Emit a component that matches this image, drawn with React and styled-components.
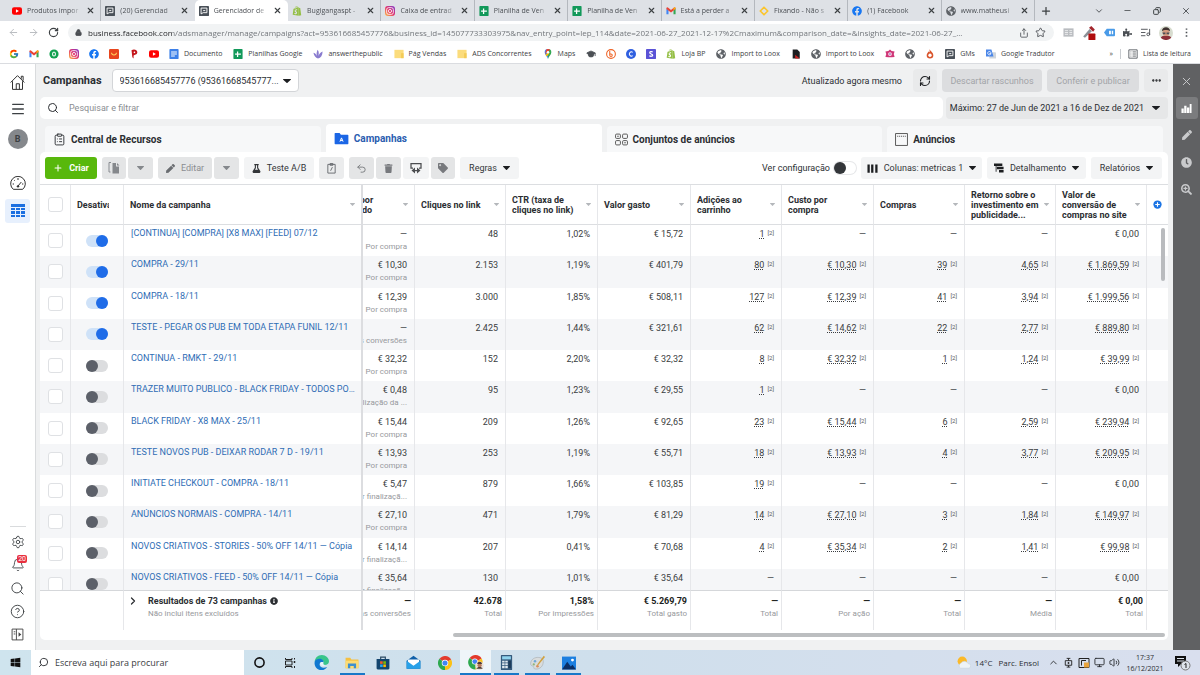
import { useState } from "react";
import styled, { createGlobalStyle, css } from "styled-components";
import {
  ArrowLeft,
  ArrowRight,
  Bell,
  ChevronDown,
  ChevronRight,
  ChevronUp,
  CircleHelp,
  ClipboardList,
  Copy,
  Ellipsis,
  GraduationCap,
  House,
  ListMusic,
  Lock,
  Menu,
  Minus,
  Monitor,
  Plus,
  RefreshCw,
  RotateCw,
  Search,
  Settings,
  Share,
  Star,
  Undo2,
  Volume2,
  X,
} from "lucide-react";
import { FcGoogle } from "react-icons/fc";
import {
  FaClock,
  FaFacebook,
  FaFlask,
  FaInfoCircle,
  FaPen,
  FaPuzzlePiece,
  FaSearchPlus,
  FaShopify,
  FaTag,
  FaTrash,
  FaWindows,
  FaGlobeAmericas,
} from "react-icons/fa";

const URL_TEXT =
  "business.facebook.com/adsmanager/manage/campaigns?act=953616685457776&business_id=145077733303975&nav_entry_point=lep_114&date=2021-06-27_2021-12-17%2Cmaximum&comparison_date=&insights_date=2021-06-27_...";

const BROWSER_TABS = [
  { icon: "youtube", label: "Produtos impor" },
  { icon: "ads", label: "(20) Gerenciad" },
  { icon: "ads", label: "Gerenciador de", active: true },
  { icon: "shopify", label: "Bugigangaspt -" },
  { icon: "instagram", label: "Caixa de entrad" },
  { icon: "sheets", label: "Planilha de Ven" },
  { icon: "sheets", label: "Planilha de Ven" },
  { icon: "gmail", label: "Está a perder a" },
  { icon: "fixando", label: "Fixando - Não s" },
  { icon: "facebook", label: "(1) Facebook" },
  { icon: "globe", label: "www.matheusi" },
];

const BOOKMARKS = [
  { icon: "google" },
  { icon: "gmail" },
  { icon: "bing" },
  { icon: "instagram" },
  { icon: "facebook" },
  { icon: "aliexpress" },
  { icon: "pin" },
  { icon: "youtube" },
  { icon: "docs", label: "Documento" },
  { icon: "sheets", label: "Planilhas Google" },
  { icon: "leaves", label: "answerthepublic" },
  { icon: "folder", label: "Pág Vendas" },
  { icon: "folder", label: "ADS Concorrentes" },
  { icon: "maps", label: "Maps" },
  { icon: "cap" },
  { icon: "bitly" },
  { icon: "canva" },
  { icon: "stripe" },
  { icon: "shopify", label: "Loja BP" },
  { icon: "globe", label: "Import to Loox" },
  { icon: "page" },
  { icon: "globe", label: "Import to Loox" },
  { icon: "flower" },
  { icon: "globe" },
  { icon: "flame" },
  { icon: "ads", label: "GMs" },
  { icon: "translate", label: "Google Tradutor" },
];

const COLUMNS = [
  { key: "result", label: "Custo por resultado", width: 52, cut: true },
  { key: "clicks", label: "Cliques no link", width: 91 },
  { key: "ctr", label: "CTR (taxa de cliques no link)", width: 92 },
  { key: "spent", label: "Valor gasto", width: 93 },
  { key: "carts", label: "Adições ao carrinho", width: 91 },
  { key: "cartCost", label: "Custo por compra", width: 92 },
  { key: "sales", label: "Compras", width: 91 },
  { key: "roas", label: "Retorno sobre o investimento em publicidade...", width: 91 },
  { key: "value", label: "Valor de conversão de compras no site", width: 91 },
];

const row = (on, name, result, kind, clicks, ctr, spent, carts, cartCost, sales, roas, value) => ({
  on, name, result, kind, clicks, ctr, spent, carts, cartCost, sales, roas, value,
});

const CAMPAIGNS = [
  row(true, "[CONTINUA] [COMPRA] [X8 MAX] [FEED] 07/12", "—", "Por compra", "48", "1,02%", "€ 15,72", "1", "—", "—", "—", "€ 0,00"),
  row(true, "COMPRA - 29/11", "€ 10,30", "Por compra", "2.153", "1,19%", "€ 401,79", "80", "€ 10,30", "39", "4,65", "€ 1.869,59"),
  row(true, "COMPRA - 18/11", "€ 12,39", "Por compra", "3.000", "1,85%", "€ 508,11", "127", "€ 12,39", "41", "3,94", "€ 1.999,56"),
  row(true, "TESTE - PEGAR OS PUB EM TODA ETAPA FUNIL 12/11", "—", "Várias conversões", "2.425", "1,44%", "€ 321,61", "62", "€ 14,62", "22", "2,77", "€ 889,80"),
  row(false, "CONTINUA - RMKT - 29/11", "€ 32,32", "Por compra", "152", "2,20%", "€ 32,32", "8", "€ 32,32", "1", "1,24", "€ 39,99"),
  row(false, "TRAZER MUITO PUBLICO - BLACK FRIDAY - TODOS POSTS", "€ 0,48", "Por visualização da ...", "95", "1,23%", "€ 29,55", "1", "—", "—", "—", "€ 0,00"),
  row(false, "BLACK FRIDAY - X8 MAX - 25/11", "€ 15,44", "Por compra", "209", "1,26%", "€ 92,65", "23", "€ 15,44", "6", "2,59", "€ 239,94"),
  row(false, "TESTE NOVOS PUB - DEIXAR RODAR 7 D - 19/11", "€ 13,93", "Por compra", "253", "1,19%", "€ 55,71", "18", "€ 13,93", "4", "3,77", "€ 209,95"),
  row(false, "INITIATE CHECKOUT - COMPRA - 18/11", "€ 5,47", "Por finalizaçã...", "879", "1,66%", "€ 103,85", "19", "—", "—", "—", "€ 0,00"),
  row(false, "ANÚNCIOS NORMAIS - COMPRA - 14/11", "€ 27,10", "Por compra", "471", "1,79%", "€ 81,29", "14", "€ 27,10", "3", "1,84", "€ 149,97"),
  row(false, "NOVOS CRIATIVOS - STORIES - 50% OFF 14/11 — Cópia", "€ 14,14", "Por finalizaçã...", "207", "0,41%", "€ 70,68", "4", "€ 35,34", "2", "1,41", "€ 99,98"),
  row(false, "NOVOS CRIATIVOS - FEED - 50% OFF 14/11 — Cópia", "€ 35,64", "Por finalizaçã...", "130", "1,01%", "€ 35,64", "—", "—", "—", "—", "€ 0,00"),
];

// modelled metrics carry the [2] footnote
const NOTED = ["carts", "cartCost", "sales", "roas", "value"];

const TOTALS = [
  { key: "result", value: "—", note: "Várias conversões" },
  { key: "clicks", value: "42.678", note: "Total" },
  { key: "ctr", value: "1,58%", note: "Por impressões" },
  { key: "spent", value: "€ 5.269,79", note: "Total gasto" },
  { key: "carts", value: "—", note: "Total" },
  { key: "cartCost", value: "—", note: "Por ação" },
  { key: "sales", value: "—", note: "Total" },
  { key: "roas", value: "—", note: "Média" },
  { key: "value", value: "€ 0,00", note: "Total" },
];

const Svg = ({ children, box = 24, size = 10 }) => (
  <svg width={size} height={size} viewBox={`0 0 ${box} ${box}`} fill="none" aria-hidden="true">
    {children}
  </svg>
);

const ChromeLogo = ({ size }) => (
  <Svg size={size}>
    <path d="M12 12 2.4 4.8A12 12 0 0 1 22.4 6Z" fill="#e33b2e" />
    <path d="M12 12 22.4 6A12 12 0 0 1 12 24Z" fill="#fbc116" />
    <path d="M12 12V24A12 12 0 0 1 2.4 4.8Z" fill="#2da94f" />
    <path d="M11 6.500H22.600L20 5H4Z" fill="#e33b2e" />
    <circle cx="12" cy="12" r="5.600" fill="#fff" />
    <circle cx="12" cy="12" r="4.400" fill="#4285f4" />
  </Svg>
);

const Brand = ({ name, size = 10 }) => {
  switch (name) {
    case "youtube":
      return (
        <Svg size={size}>
          <rect x="0" y="3" width="24" height="18" rx="5" fill="#f00" />
          <path d="M9.500 8v8l7-4z" fill="#fff" />
        </Svg>
      );
    case "ads":
      return (
        <Svg size={size}>
          <rect width="24" height="24" rx="2" fill="#4a5159" />
          <path d="M5 19V5h14v11H10l-5 3M10 11h5" stroke="#fff" strokeWidth="2.200" />
        </Svg>
      );
    case "shopify":
      return <FaShopify size={size} color="#95bf47" />;
    case "instagram":
      return (
        <Svg size={size}>
          <defs>
            <linearGradient id="insta" x1="0" y1="1" x2="1" y2="0">
              <stop offset="0" stopColor="#fdc448" />
              <stop offset="0.5" stopColor="#e1306c" />
              <stop offset="1" stopColor="#7a3bd0" />
            </linearGradient>
          </defs>
          <rect width="24" height="24" rx="7" fill="url(#insta)" />
          <rect x="4" y="4" width="16" height="16" rx="4.500" stroke="#fff" strokeWidth="2" />
          <circle cx="12" cy="12" r="3.800" stroke="#fff" strokeWidth="2" />
        </Svg>
      );
    case "sheets":
      return (
        <Svg size={size}>
          <rect x="1" width="22" height="24" rx="2" fill="#12995a" />
          <path d="M5 12h14M11 6v13" stroke="#fff" strokeWidth="3" />
        </Svg>
      );
    case "docs":
      return (
        <Svg size={size}>
          <rect x="1" width="22" height="24" rx="2" fill="#3d80e8" />
          <path d="M5 7h14M5 12h14M5 17h9" stroke="#fff" strokeWidth="2.500" />
        </Svg>
      );
    case "gmail":
      return (
        <Svg size={size}>
          <path d="M1 20V6l5 4v10z" fill="#4285f4" />
          <path d="M18 20V10l5-4v14z" fill="#34a853" />
          <path d="M1 7V4l3-1 8 6.500L20 3l3 1v3l-11 8.500z" fill="#ea4335" />
          <path d="M18 10l5-4V5l-2-2-3 2z" fill="#fbbc04" />
        </Svg>
      );
    case "fixando":
      return (
        <Svg size={size}>
          <path d="M12 3l9 9-9 9-9-9z" stroke="#fbc52d" strokeWidth="4" strokeLinejoin="round" />
        </Svg>
      );
    case "facebook":
      return <FaFacebook size={size} color="#1877f2" />;
    case "globe":
      return <FaGlobeAmericas size={size} color="#5f6368" />;
    case "google":
      return <FcGoogle size={size} />;
    case "bing":
      return (
        <Svg size={size}>
          <circle cx="12" cy="12" r="11" fill="#12a150" />
          <ellipse cx="12" cy="12" rx="3.500" ry="5" stroke="#fff" strokeWidth="2.500" />
        </Svg>
      );
    case "aliexpress":
      return (
        <Svg size={size}>
          <rect width="24" height="24" rx="3" fill="#e8451d" />
          <path d="M6 9c1 7 11 7 12 0" stroke="#ffd35c" strokeWidth="2.500" />
        </Svg>
      );
    case "pin":
      return (
        <Svg size={size}>
          <path d="M6 3c6-4 14-1 14 5s-7 6-9 8v7L8 20z" fill="#c4161c" />
          <circle cx="13" cy="8" r="2" fill="#fff" />
        </Svg>
      );
    case "leaves":
      return (
        <Svg size={size}>
          <path
            d="M12 23C6 21 3 17 1 9c5 1 7 5 8 8-1-6 0-10 2-15 4 5 3 10 2 15 2-5 5-9 10-11 0 9-4 15-11 17z"
            fill="#8a7ccf"
          />
        </Svg>
      );
    case "folder":
      return (
        <Svg size={size}>
          <path d="M1 2h22v20H1z" fill="#fbdc7c" />
          <path d="M17 22V10h6v12z" fill="#f3cb57" />
        </Svg>
      );
    case "maps":
      return (
        <Svg size={size}>
          <path d="M12 24C10 17 4 14 4 8a8 8 0 0 1 8-8z" fill="#4285f4" />
          <path d="M12 24c2-7 8-10 8-16a8 8 0 0 0-8-8z" fill="#34a853" />
          <path d="M5 12 17 2a8 8 0 0 0-9-1z" fill="#ea4335" />
          <path d="M6 14l6-6 3 3-6 7z" fill="#fbbc04" />
          <circle cx="12" cy="8" r="3" fill="#fff" />
        </Svg>
      );
    case "cap":
      return <GraduationCap size={size} color="#4b4f54" fill="#4b4f54" />;
    case "bitly":
      return (
        <Svg size={size}>
          <circle cx="12" cy="12" r="10.500" stroke="#ee6123" strokeWidth="2.500" />
          <path d="M9 5v10a3 3 0 1 0 3-3H9" stroke="#ee6123" strokeWidth="2.500" />
        </Svg>
      );
    case "canva":
      return (
        <Svg size={size}>
          <circle cx="12" cy="12" r="12" fill="#2f5fe0" />
          <path d="M16 8a5 5 0 1 0 0 8" stroke="#fff" strokeWidth="2.500" />
        </Svg>
      );
    case "stripe":
      return (
        <Svg size={size}>
          <rect width="24" height="24" rx="2" fill="#5a52d6" />
          <path d="M16 7c-3-1-7-1-7 2s7 3 7 6-5 3-8 1" stroke="#fff" strokeWidth="3" />
        </Svg>
      );
    case "page":
      return (
        <Svg size={size}>
          <path d="M4 1h11l6 6v16H4z" fill="#1c1e21" />
          <path d="M10 14l11 9H10z" fill="#c22" />
        </Svg>
      );
    case "flower":
      return (
        <Svg size={size}>
          <path d="M1 6l7-1 4-4 4 4 7 1-2 6 2 7-7 1h-8l-7-1 2-7z" fill="#cf3677" />
          <circle cx="12" cy="12" r="4.500" fill="#fbdce9" />
          <circle cx="12" cy="12" r="2" fill="#7a4fb0" />
        </Svg>
      );
    case "flame":
      return (
        <Svg size={size}>
          <path d="M11 0c1 5 9 8 9 15a8 8 0 0 1-16 0c0-4 3-5 4-9l3 2z" fill="#d9542b" />
          <circle cx="12" cy="15" r="4" fill="#fff" />
        </Svg>
      );
    case "translate":
      return (
        <Svg size={size}>
          <rect x="8" y="8" width="16" height="15" rx="1" fill="#cfd5dc" />
          <path d="M0 1h13l5 17H0z" fill="#4a86e8" />
          <path d="M12 9a4 4 0 1 0 0 2H8" stroke="#fff" strokeWidth="2" />
        </Svg>
      );
    default:
      return null;
  }
};

const Caret = ({ w = 7, h = 4, color = "#1c1e21" }) => (
  <svg width={w} height={h} viewBox="0 0 8 5" preserveAspectRatio="none" aria-hidden="true">
    <path d="M0.500 0h7a.5.5 0 0 1 .3.8L4.500 4.600a.7.7 0 0 1-1 0L.2.8A.5.5 0 0 1 .5 0z" fill={color} />
  </svg>
);

const TableIcon = () => (
  <svg width="16" height="14" viewBox="0 0 16 14" aria-hidden="true">
    <path
      d="M1 0h14v3H1zM1 4h4v2H1zM6 4h4v2H6zM11 4h4v2h-4zM1 7h4v3H1zM6 7h4v3H6zM11 7h4v3h-4zM1 11h4v2H1zM6 11h4v2H6zM11 11h4v2h-4z"
      fill="#1b6fe0"
    />
  </svg>
);

const TaskIcon = ({ name }) => {
  switch (name) {
    case "cortana":
      return (
        <Svg size={11}>
          <circle cx="12" cy="12" r="10" stroke="#111" strokeWidth="3.500" />
        </Svg>
      );
    case "taskview":
      return (
        <Svg size={12}>
          <path d="M3 2v3h13V2M3 22v-3h13v3M3 8h13v8H3zM21 2v3M21 18v4" stroke="#222" strokeWidth="2" />
          <path d="M19.500 8h3v4h-3z" fill="#222" />
        </Svg>
      );
    case "edge":
      return (
        <Svg size={15}>
          <path d="M1 12C1 5 6 0 12.500 0S24 5 24 10c0 4-3 6-7 6-2 0-3-1-2-3 1-3-1-6-5-6-5 0-9 2-9 5z" fill="#39c58b" />
          <path d="M1 11c1-4 5-5 8-5 4 0 7 3 6 6-3-2-6 0-6 3 0 4 5 7 12 4-2 3-5 5-9 5C5 24 0 18 1 11z" fill="#1078d0" />
          <path d="M9.500 13c2-3 5-2 5.500-.5-1 2 0 3.500 3 3.500-3 3-8 1-8.500-3z" fill="#e6f3fa" />
        </Svg>
      );
    case "explorer":
      return (
        <Svg size={14}>
          <path d="M1 3h8l2 3h12v15H1z" fill="#f5c042" />
          <path d="M1 8h22v13H1z" fill="#fddc74" />
          <path d="M5 21v-8h14v8h-4v-4H9v4z" fill="#3e8fd0" />
        </Svg>
      );
    case "store":
      return (
        <Svg size={14}>
          <path d="M8 6V2h8v4" stroke="#2c4a63" strokeWidth="2" />
          <path d="M1 5h22v16a2 2 0 0 1-2 2H3a2 2 0 0 1-2-2z" fill="#13456e" />
          <path d="M7 9h4.500v4.500H7z" fill="#f05a28" />
          <path d="M12.500 9H17v4.500h-4.500z" fill="#7fba00" />
          <path d="M7 14.500h4.500V19H7z" fill="#22a7f0" />
          <path d="M12.500 14.500H17V19h-4.500z" fill="#ffb900" />
        </Svg>
      );
    case "mail":
      return (
        <Svg size={15}>
          <path d="M1 9 12 1l11 8v13H1z" fill="#0f5fa8" />
          <path d="M3 7h18v8l-9 5-9-5z" fill="#fff" />
          <path d="M1 9l11 8 11-8v13H1z" fill="#28a1e8" />
        </Svg>
      );
    case "chrome":
      return <ChromeLogo size={14} />;
    case "chromeUser":
      return (
        <svg width="16" height="15" viewBox="0 0 26 25" aria-hidden="true">
          <path d="M12 12 2.400 4.800A12 12 0 0 1 22.400 6Z" fill="#e33b2e" />
          <path d="M12 12 22.400 6A12 12 0 0 1 12 24Z" fill="#fbc116" />
          <path d="M12 12V24A12 12 0 0 1 2.400 4.800Z" fill="#2da94f" />
          <circle cx="11" cy="11" r="5" fill="#fff" />
          <circle cx="11" cy="11" r="4" fill="#4285f4" />
          <circle cx="19" cy="18" r="7" fill="#e9e2da" />
          <circle cx="19" cy="17" r="3.500" fill="#b5785a" />
          <path d="M15 15c0-5 8-5 8 0zM14 23c1-4 9-4 10 0z" fill="#4c3b36" />
        </svg>
      );
    case "calc":
      return (
        <Svg size={15}>
          <rect x="3" y="0" width="18" height="24" rx="1" fill="#35597c" />
          <path d="M5 2h14v5H5z" fill="#8fd3ee" />
          <path d="M5 9h4v3H5zM10 9h4v3h-4zM5 13h4v3H5zM10 13h4v3h-4zM5 17h4v4H5zM10 17h4v4h-4z" fill="#dfe8ee" />
          <path d="M15 9h4v12h-4z" fill="#1c3a58" />
        </Svg>
      );
    case "notes":
      return (
        <Svg size={15}>
          <path d="M1 14C1 7 8 3 14 4c6 0 8 4 7 9-1 7-8 11-14 9-2-1 0-3-2-4s-4-1-4-4z" fill="#d9dcdc" stroke="#a9aeb0" />
          <circle cx="8" cy="10" r="2" fill="#6fa8d8" />
          <circle cx="6" cy="15" r="1.800" fill="#8fb57a" />
          <circle cx="12" cy="18" r="2" fill="#d98c5f" />
          <path d="M22 1 13 13l-3 5 4-3L24 3z" fill="#d0a03e" />
        </Svg>
      );
    default:
      return (
        <Svg size={14}>
          <path d="M0 1h24v22H0z" fill="#1c7fe0" />
          <path d="M0 23 9 10l6 8 3-3 6 8z" fill="#0b2f66" />
          <circle cx="18" cy="7" r="2.500" fill="#fff" />
        </Svg>
      );
  }
};

const TASKS = [
  { name: "cortana", label: "Cortana" },
  { name: "taskview", label: "Visão de tarefas" },
  { name: "edge", label: "Edge" },
  { name: "explorer", label: "Explorador", open: true },
  { name: "store", label: "Loja" },
  { name: "mail", label: "Correio" },
  { name: "chrome", label: "Chrome" },
  { name: "chromeUser", label: "Chrome", open: true, active: true },
  { name: "calc", label: "Calculadora", open: true },
  { name: "notes", label: "Paint", open: true },
  { name: "photos", label: "Fotos", open: true },
];

const BrowserChrome = () => (
  <header>
    <TabStrip>
      <TabList>
        {BROWSER_TABS.map((tab, i) => (
          <BrowserTab
            key={i}
            $active={tab.active}
            $bare={tab.active || BROWSER_TABS[i + 1]?.active}
          >
            <Brand name={tab.icon} />
            <TabLabel>{tab.label}</TabLabel>
            <PlainButton aria-label="Fechar">
              <X size={9} strokeWidth={3} />
            </PlainButton>
          </BrowserTab>
        ))}
      </TabList>
      <NewTab aria-label="Nova guia">
        <Plus size={12} strokeWidth={2.5} />
      </NewTab>
      <WindowControls>
        <PlainButton aria-label="Pesquisar guias"><ChevronDown size={10} /></PlainButton>
        <PlainButton aria-label="Minimizar"><Minus size={9} /></PlainButton>
        <PlainButton aria-label="Restaurar"><Copy size={8} strokeWidth={3} transform="scale(-1 1)" /></PlainButton>
        <PlainButton aria-label="Fechar janela"><X size={10} /></PlainButton>
      </WindowControls>
    </TabStrip>
    <AddressRow>
      <PlainButton aria-label="Voltar"><ArrowLeft size={11} color="#b5b8bc" /></PlainButton>
      <PlainButton aria-label="Avançar"><ArrowRight size={11} color="#b5b8bc" /></PlainButton>
      <PlainButton aria-label="Recarregar"><RotateCw size={11} strokeWidth={2.5} /></PlainButton>
      <AddressBar>
        <Lock size={7} fill="#4b4f54" strokeWidth={3} />
        <AddressInput aria-label="Endereço" defaultValue={URL_TEXT} />
        <Share size={10} />
        <Star size={11} />
      </AddressBar>
      <Extensions>
        <Svg size={11}>
          <rect x="1" y="3" width="22" height="18" fill="#b9bcc0" />
          <path d="M4 8h7M4 12h7M4 16h7M14 8h6M14 12h6M14 16h6" stroke="#fff" strokeWidth="1.500" />
        </Svg>
        <Svg size={14}>
          <path d="M2 18 13 5l4 4L5 20z" fill="#8b9097" />
          <path d="M12 3l7 7 3-4-6-6z" fill="#a3262c" />
          <rect x="11" y="13" width="12" height="11" rx="1" fill="#b00d0d" />
        </Svg>
        <Svg size={11}>
          <path d="M0 12l6-8h16a2 2 0 0 1 2 2v12a2 2 0 0 1-2 2H6z" fill="#4a9be8" />
          <path d="M11 8h4v8h-4zM17 8h3v8h-3z" fill="#fff" />
        </Svg>
        <FaPuzzlePiece size={9} />
        <ListMusic size={11} />
        <Svg size={14}>
          <circle cx="12" cy="12" r="12" fill="#d7dccf" />
          <path d="M3 20c2-5 16-5 18 0a12 12 0 0 1-18 0z" fill="#8c2f38" />
          <circle cx="12" cy="11" r="6" fill="#d49a7e" />
          <path d="M5 9c0-9 14-9 14 0-3-3-11-3-14 0z" fill="#3e3230" />
          <path d="M6 11h5v3H7zM13 11h5l-1 3h-4z" fill="#4a4f57" />
        </Svg>
        <Svg size={11}>
          <path d="M12 3v3M12 10.500v3M12 18v3" stroke="#4b4f54" strokeWidth="3.500" />
        </Svg>
      </Extensions>
    </AddressRow>
    <BookmarkBar>
      {BOOKMARKS.map((item, i) => (
        <Bookmark key={i} href="#" aria-label={item.label || item.icon}>
          <Brand name={item.icon} />
          {item.label && <BookmarkLabel>{item.label}</BookmarkLabel>}
        </Bookmark>
      ))}
      <BookmarkEnd>
        <span>»</span>
        <ReadingList>
          <Svg>
            <path d="M2 2h20v20H2zM6 7h2M11 7h8M6 12h2M11 12h8M6 17h2M11 17h8" stroke="#4b4f54" strokeWidth="2" />
          </Svg>
          Lista de leitura
        </ReadingList>
      </BookmarkEnd>
    </BookmarkBar>
  </header>
);

const SideNav = () => (
  <Side>
    <SideGroup>
      <SideButton aria-label="Início">
        <Svg size={15}>
          <path d="M1 12 12 1l11 11M4 10v13h16V10M15 23v-9h-5v9M18 6V2h3v7" stroke="#333" strokeWidth="1.600" />
        </Svg>
      </SideButton>
      <SideButton aria-label="Menu"><Menu size={16} strokeWidth={2} /></SideButton>
      <Avatar aria-label="Conta">B</Avatar>
    </SideGroup>
    <SideGroup $spaced>
      <SideButton aria-label="Visão geral">
        <Svg size={16}>
          <path d="M5 20A11 11 0 1 1 19 20zM12 15l5-6M12 3v3M4 12h2M6.500 6.500l1 1M18 12h2" stroke="#333" strokeWidth="1.500" />
          <circle cx="12" cy="15.500" r="1.800" fill="#333" />
        </Svg>
      </SideButton>
      <SideButton aria-label="Campanhas" $active><TableIcon /></SideButton>
    </SideGroup>
    <SideBottom>
      <SideButton aria-label="Definições"><Settings size={14} strokeWidth={1.5} /></SideButton>
      <SideButton aria-label="Notificações">
        <Bell size={14} strokeWidth={1.5} />
        <Badge>20</Badge>
      </SideButton>
      <SideButton aria-label="Pesquisar"><Search size={15} strokeWidth={1.5} /></SideButton>
      <SideButton aria-label="Ajuda"><CircleHelp size={15} strokeWidth={1.5} /></SideButton>
      <SideButton aria-label="Expandir">
        <Svg size={13}>
          <path d="M2 2h20v20H2zM10 2v20M5 7h3M5 11h3" stroke="#444" strokeWidth="1.700" />
          <path d="M14 8l5 4-5 4z" fill="#444" />
        </Svg>
      </SideButton>
    </SideBottom>
  </Side>
);

const Toolbar = () => (
  <ToolbarRow>
    <CreateButton>
      <Plus size={10} strokeWidth={2.5} />
      Criar
    </CreateButton>
    <Split>
      <ToolButton $tone="off" $w={24} aria-label="Duplicar">
        <Svg size={12}>
          <path d="M6 1H2v19h3" stroke="#888b90" strokeWidth="2" />
          <path d="M9 2h7v7h6v14H9z" fill="#85888c" />
          <path d="M18 2l5 5h-5z" fill="#85888c" />
        </Svg>
      </ToolButton>
      <ToolButton $tone="off" $w={25} aria-label="Mais opções de duplicar"><Caret color="#85888c" /></ToolButton>
    </Split>
    <Split>
      <ToolButton $tone="off" $w={54}>
        <FaPen size={9} color="#6a6d71" />
        Editar
      </ToolButton>
      <ToolButton $tone="off" $w={25} aria-label="Mais opções de editar"><Caret color="#85888c" /></ToolButton>
    </Split>
    <ToolButton $w={70}>
      <FaFlask size={9} />
      Teste A/B
    </ToolButton>
    <ToolButton $tone="mid" $w={25} aria-label="Regras rápidas">
      <Svg size={11}>
        <path d="M4 3h16v19H4zM9 1h6v4H9zM10 17l4-8" stroke="#65686c" strokeWidth="2" />
      </Svg>
    </ToolButton>
    <Split>
      <ToolButton $tone="off" $w={25} aria-label="Anular"><Undo2 size={11} color="#77797d" /></ToolButton>
      <ToolButton $tone="off" $w={25} aria-label="Eliminar"><FaTrash size={9} color="#77797d" /></ToolButton>
      <ToolButton $w={26} aria-label="Trocar">
        <Svg size={12}>
          <path d="M6 12H2V3h20v9h-4M8 17h8" stroke="#4b4d50" strokeWidth="2.500" />
          <path d="M10 11v12l-7-6zM14 11v12l7-6z" fill="#4b4d50" />
        </Svg>
      </ToolButton>
      <ToolButton $tone="off" $w={24} aria-label="Etiqueta"><FaTag size={10} color="#77797d" /></ToolButton>
    </Split>
    <ToolButton $w={59} aria-haspopup="menu">
      Regras
      <Caret />
    </ToolButton>
    <SetupLabel>
      Ver configuração
      <Switch type="checkbox" $ghost />
    </SetupLabel>
    <ToolButton $w={121} aria-haspopup="menu">
      <Svg size={11}>
        <path d="M1 3h5v18H1zM9 3h5v18H9zM18 3h5v18h-5z" fill="#1c1e21" />
      </Svg>
      Colunas: metricas 1
      <Caret />
    </ToolButton>
    <ToolButton $w={99} aria-haspopup="menu">
      <Svg size={10}>
        <path d="M0 1h20v6H0zM7 9h16v6H7zM12 17h11v6H12zM4 7h2v14H4z" fill="#1c1e21" />
      </Svg>
      Detalhamento
      <Caret />
    </ToolButton>
    <ToolButton $w={71} aria-haspopup="menu">
      Relatórios
      <Caret />
    </ToolButton>
  </ToolbarRow>
);

const CampaignRow = ({ item, onToggle }) => (
  <tr>
    <Td $mid>
      <Tick type="checkbox" aria-label={`Selecionar ${item.name}`} />
    </Td>
    <Td $mid>
      <Switch
        type="checkbox"
        checked={item.on}
        onChange={onToggle}
        aria-label={`Ativar ${item.name}`}
      />
    </Td>
    <Td $edge>
      <CampaignLink href="#">{item.name}</CampaignLink>
    </Td>
    {COLUMNS.map(({ key }) => {
      const value = item[key];
      const noted = NOTED.includes(key) && value !== "—" && value !== "€ 0,00";
      return (
        <Td key={key}>
          <Value>
            {noted ? <Estimated>{value}</Estimated> : value}
            {noted && <Footnote>[2]</Footnote>}
          </Value>
          {key === "result" && <Note>{item.kind}</Note>}
        </Td>
      );
    })}
    <Td />
  </tr>
);

const CampaignTable = () => {
  const [items, setItems] = useState(CAMPAIGNS);

  const toggle = (index) =>
    setItems(items.map((item, i) => (i === index ? { ...item, on: !item.on } : item)));

  return (
    <TableArea>
      <Table>
        <colgroup>
          <Col $w={31} />
          <Col $w={53} />
          <col />
          {COLUMNS.map((c) => (
            <Col key={c.key} $w={c.width} />
          ))}
          <Col $w={21} />
        </colgroup>
        <thead>
          <tr>
            <Th $center><Tick type="checkbox" aria-label="Selecionar tudo" /></Th>
            <Th><Clipped>Desativar</Clipped></Th>
            <Th $edge>
              <HeadInner>
                Nome da campanha
                <Caret w={5} h={3} color="#b4b7bb" />
              </HeadInner>
            </Th>
            {COLUMNS.map((c) => (
              <Th key={c.key}>
                <HeadInner>
                  {c.cut ? <CutLabel><span>{c.label}</span></CutLabel> : <HeadLabel>{c.label}</HeadLabel>}
                  <Caret w={5} h={3} color="#b4b7bb" />
                </HeadInner>
              </Th>
            ))}
            <Th $center>
              <PlainButton aria-label="Adicionar coluna">
                <Svg size={9}>
                  <circle cx="12" cy="12" r="11" fill="#1b74e4" />
                  <path d="M12 6v12M6 12h12" stroke="#fff" strokeWidth="3" />
                </Svg>
              </PlainButton>
            </Th>
          </tr>
        </thead>
        <tbody>
          {items.map((item, i) => (
            <CampaignRow key={item.name} item={item} onToggle={() => toggle(i)} />
          ))}
        </tbody>
        <tfoot>
          <tr>
            <FootTd colSpan={2} />
            <FootTd $edge>
              <Summary>
                <ChevronRight size={12} strokeWidth={2.5} />
                <div>
                  <SummaryTitle>
                    Resultados de 73 campanhas
                    <FaInfoCircle size={8} />
                  </SummaryTitle>
                  <SummaryNote>Não inclui itens excluídos</SummaryNote>
                </div>
              </Summary>
            </FootTd>
            {TOTALS.map((t) => (
              <FootTd key={t.key}>
                <Value $bold>{t.value}</Value>
                <Note>{t.note}</Note>
              </FootTd>
            ))}
            <FootTd />
          </tr>
        </tfoot>
      </Table>
      <ScrollThumb />
    </TableArea>
  );
};

const Taskbar = () => (
  <TaskbarRow>
    <StartButton aria-label="Iniciar"><FaWindows size={11} /></StartButton>
    <TaskSearch>
      <Search size={11} transform="scale(-1 1)" />
      <TaskInput aria-label="Pesquisar no Windows" placeholder="Escreva aqui para procurar" />
    </TaskSearch>
    <TaskList>
      {TASKS.map((t, i) => (
        <Task key={i} aria-label={t.label} $open={t.open} $active={t.active}>
          <TaskIcon name={t.name} />
        </Task>
      ))}
    </TaskList>
    <Tray>
      <Svg size={14}>
        <circle cx="9" cy="9" r="8" fill="#fbb929" />
        <path d="M6 21a5 5 0 0 1 1-9 7 7 0 0 1 12 1 4 4 0 0 1 1 8z" fill="#eef3f7" stroke="#c7d3dd" />
      </Svg>
      <Weather><span>14°C</span><span>Parc. Ensol</span></Weather>
      <ChevronUp size={11} />
      <Svg size={11}>
        <path d="M5 8h14v10H5zM8 3h8M8 22h8M12 3v5M12 18v4" stroke="#222" strokeWidth="2" />
        <circle cx="12" cy="13" r="2" fill="#222" />
      </Svg>
      <Svg size={12}>
        <path d="M2 3h20v18H2zM7 17V7h9" stroke="#222" strokeWidth="2" />
        <rect x="12" y="11" width="10" height="10" fill="#e8a33d" />
      </Svg>
      <Monitor size={11} />
      <Volume2 size={11} />
      <Clockface>
        <span>17:37</span>
        <span>16/12/2021</span>
      </Clockface>
      <svg width="17" height="17" viewBox="0 0 17 17" aria-hidden="true">
        <path d="M1 2h11v8H7l-3 3v-3H1z" fill="#111" />
        <path d="M3 4.500h7M3 7h7" stroke="#dfe6ee" />
        <circle cx="11.500" cy="11.500" r="4.500" fill="#dde3ea" stroke="#777" />
        <path d="M10.500 10.500l1.500-1v4.500" stroke="#222" fill="none" />
      </svg>
    </Tray>
  </TaskbarRow>
);

export default function App() {
  return (
    <Screen>
      <GlobalStyle />
      <BrowserChrome />
      <Body>
        <SideNav />
        <Main>
          <TopRow>
            <Title>Campanhas</Title>
            <AccountPicker>
              <AccountSelect aria-label="Conta de anúncios">
                <option>953616685457776 (95361668545777...</option>
              </AccountSelect>
              <Caret w={8} />
            </AccountPicker>
            <Updated>Atualizado agora mesmo</Updated>
            <TopButton $w={24} aria-label="Atualizar"><RefreshCw size={12} strokeWidth={2.2} /></TopButton>
            <TopButton $w={100} $muted>Descartar rascunhos</TopButton>
            <TopButton $w={92} $muted>Conferir e publicar</TopButton>
            <TopButton $w={24} aria-label="Mais"><Ellipsis size={11} strokeWidth={3} /></TopButton>
          </TopRow>
          <FilterRow>
            <SearchBox>
              <Search size={12} />
              <SearchInput aria-label="Pesquisar" placeholder="Pesquisar e filtrar" />
            </SearchBox>
            <DateButton>
              Máximo: 27 de Jun de 2021 a 16 de Dez de 2021
              <Caret w={8} />
            </DateButton>
          </FilterRow>
          <Levels>
            <Level>
              <ClipboardList size={13} strokeWidth={1.7} />
              Central de Recursos
            </Level>
            <Level $active>
              <Svg size={15}>
                <path d="M1 4a1 1 0 0 1 1-1h7l2 3h11a1 1 0 0 1 1 1v13a1 1 0 0 1-1 1H2a1 1 0 0 1-1-1z" fill="#1b66e5" />
                <path d="M9.500 17l2.500-6 2.500 6M10.500 15h3" stroke="#fff" strokeWidth="1.600" />
              </Svg>
              Campanhas
            </Level>
            <Level>
              <Svg size={13}>
                <path
                  d="M1 4a2 2 0 0 1 2-2h5a2 2 0 0 1 2 2v4a2 2 0 0 1-2 2H3a2 2 0 0 1-2-2zM14 4a2 2 0 0 1 2-2h5a2 2 0 0 1 2 2v4a2 2 0 0 1-2 2h-5a2 2 0 0 1-2-2zM1 16a2 2 0 0 1 2-2h5a2 2 0 0 1 2 2v4a2 2 0 0 1-2 2H3a2 2 0 0 1-2-2zM14 16a2 2 0 0 1 2-2h5a2 2 0 0 1 2 2v4a2 2 0 0 1-2 2h-5a2 2 0 0 1-2-2zM4 6h3M17 18h3"
                  stroke="#444"
                  strokeWidth="1.600"
                />
              </Svg>
              Conjuntos de anúncios
            </Level>
            <Level>
              <Svg size={13}>
                <path d="M1 1h22v22H1z" stroke="#444" strokeWidth="1.600" />
                <path d="M4 6h16" stroke="#444" strokeWidth="1.600" strokeDasharray="2 1.500" />
              </Svg>
              Anúncios
            </Level>
          </Levels>
          <Panel>
            <Toolbar />
            <CampaignTable />
            <HorizontalScroll><HorizontalThumb /></HorizontalScroll>
          </Panel>
        </Main>
        <Rail>
          <RailButton aria-label="Fechar painel"><X size={13} strokeWidth={1.8} /></RailButton>
          <RailButton aria-label="Gráficos" $active>
            <Svg size={11}>
              <path d="M1 12h5v10H1zM7 6h5v16H7zM13 10h5v12h-5zM19 2h4v20h-4z" fill="#fff" />
            </Svg>
          </RailButton>
          <RailButton aria-label="Editar"><FaPen size={10} /></RailButton>
          <RailButton aria-label="Histórico"><FaClock size={11} /></RailButton>
          <RailButton aria-label="Inspecionar"><FaSearchPlus size={11} /></RailButton>
        </Rail>
      </Body>
      <Taskbar />
    </Screen>
  );
}

const GlobalStyle = createGlobalStyle`
  * {
    box-sizing: border-box;
  }

  body {
    margin: 0;
    font-family: Roboto, "Liberation Sans", sans-serif;
    font-size: 9px;
    color: #2b2e32;
  }

  button, input, select {
    font: inherit;
    color: inherit;
    margin: 0;
    border: none;
    outline: none;
  }

  svg {
    flex: none;
  }
`;

const Screen = styled.div`
  display: flex;
  flex-direction: column;
  height: 100vh;
  overflow: hidden;
  background: #f0f1f2;
`;

const PlainButton = styled.button`
  display: flex;
  align-items: center;
  justify-content: center;
  padding: 0;
  background: none;
  color: #3c4043;
`;

/* browser window */

const TabStrip = styled.div`
  display: flex;
  align-items: stretch;
  height: 21px;
  padding-left: 8px;
  background: #dee1e6;
  font-family: "Open Sans", "Noto Sans", sans-serif;
  font-size: 7px;
`;

const TabList = styled.div`
  display: flex;
  flex: 1;
  min-width: 0;
`;

const BrowserTab = styled.div`
  display: flex;
  flex: 1;
  align-items: center;
  gap: 5px;
  min-width: 0;
  padding: 0 5px 0 4px;
  color: #4b4f54;
  border-right: 1px solid ${({ $bare }) => ($bare ? "transparent" : "#b4b8be")};
  ${({ $active }) =>
    $active &&
    css`
      background: #fff;
      border-radius: 5px 5px 0 0;
    `}
`;

const TabLabel = styled.span`
  flex: 1;
  min-width: 0;
  overflow: hidden;
  white-space: nowrap;
  mask-image: linear-gradient(90deg, #000 80%, transparent);
`;

const NewTab = styled(PlainButton)`
  width: 22px;
`;

const WindowControls = styled.div`
  display: grid;
  grid-template-columns: repeat(4, 29px);
  margin-left: 27px;
`;

const AddressRow = styled.div`
  display: flex;
  align-items: center;
  gap: 9px;
  height: 23px;
  padding: 0 8px;
  background: #fff;
`;

const AddressBar = styled.div`
  display: flex;
  flex: 1;
  align-items: center;
  gap: 6px;
  height: 17px;
  padding: 0 8px 0 7px;
  border-radius: 9px;
  background: #f1f3f4;
  color: #4b4f54;
`;

const AddressInput = styled.input`
  flex: 1;
  min-width: 0;
  padding: 0;
  background: linear-gradient(90deg, #202124 84px, #6b6f74 84px);
  background-clip: text;
  color: transparent;
  font-family: "Open Sans", "Noto Sans", sans-serif;
  font-size: 8px;
`;

const Extensions = styled.div`
  display: flex;
  align-items: center;
  gap: 8px;
  color: #4b4f54;
`;

const BookmarkBar = styled.nav`
  display: flex;
  align-items: center;
  gap: 10px;
  height: 20px;
  padding: 0 9px;
  background: #fff;
  border-bottom: 1px solid #dadce0;
  font-family: "Open Sans", "Noto Sans", sans-serif;
  font-size: 7px;
  color: #3c4043;
`;

const Bookmark = styled.a`
  display: flex;
  align-items: center;
  gap: 5px;
  color: inherit;
  text-decoration: none;
  white-space: nowrap;
`;

const BookmarkLabel = styled.span`
  margin-right: 1px;
`;

const BookmarkEnd = styled.div`
  display: flex;
  align-items: center;
  gap: 7px;
  margin-left: auto;
`;

const ReadingList = styled(PlainButton)`
  gap: 5px;
  padding-left: 7px;
  border-left: 1px solid #c8cbcf;
  white-space: nowrap;
`;

/* page frame */

const Body = styled.div`
  display: flex;
  flex: 1;
  min-height: 0;
`;

const Side = styled.nav`
  display: flex;
  flex-direction: column;
  width: 36px;
  padding: 6px 0 5px;
  background: #fff;
  border-right: 1px solid #d9dbdd;
`;

const SideGroup = styled.div`
  display: flex;
  flex-direction: column;
  align-items: center;
  gap: 3px;
  margin-top: ${({ $spaced }) => ($spaced ? "23px" : "0")};
`;

const SideBottom = styled.div`
  display: flex;
  flex-direction: column;
  align-items: center;
  gap: 1px;
  width: 16px;
  margin: auto auto 0;
  padding-top: 4px;
  border-top: 1px solid #d9dbdd;

  button {
    height: 22px;
  }
`;

const SideButton = styled(PlainButton)`
  position: relative;
  width: 25px;
  height: 24px;
  border-radius: 3px;
  background: ${({ $active }) => ($active ? "#e7f0fd" : "none")};
`;

const Avatar = styled(PlainButton)`
  width: 20px;
  height: 20px;
  margin-top: 5px;
  border-radius: 50%;
  background: #85888c;
  font-size: 9px;
  font-weight: 700;
`;

const Badge = styled.span`
  position: absolute;
  top: 1px;
  right: 3px;
  padding: 0 1px;
  border-radius: 2px;
  background: #e8303f;
  color: #fff;
  font-size: 7px;
  line-height: 8px;
`;

const Main = styled.main`
  display: flex;
  flex: 1;
  flex-direction: column;
  min-width: 0;
  padding: 5px 5px 10px 4px;
`;

const TopRow = styled.div`
  display: flex;
  align-items: center;
  gap: 5px;
  height: 23px;
`;

const Title = styled.h1`
  margin: 0 5px 0 3px;
  font-size: 11px;
  font-weight: 700;
`;

const AccountPicker = styled.div`
  display: flex;
  align-items: center;
  width: 187px;
  height: 23px;
  padding: 0 7px;
  border: 1px solid #d3d5d8;
  border-radius: 4px;
  background: #fff;
`;

const AccountSelect = styled.select`
  flex: 1;
  min-width: 0;
  padding: 0;
  appearance: none;
  background: none;
`;

const Updated = styled.span`
  margin: 0 6px 0 auto;
`;

const TopButton = styled.button`
  display: flex;
  align-items: center;
  justify-content: center;
  width: ${({ $w }) => $w}px;
  height: 23px;
  padding: 0;
  border-radius: 4px;
  background: ${({ $muted }) => ($muted ? "#dcdddf" : "#e9eaeb")};
  color: ${({ $muted }) => ($muted ? "#a2a4a8" : "#1c1e21")};
  white-space: nowrap;
`;

const FilterRow = styled.div`
  display: flex;
  gap: 3px;
  height: 22px;
  margin-top: 5px;
`;

const SearchBox = styled.label`
  display: flex;
  flex: 1;
  align-items: center;
  gap: 10px;
  padding: 0 7px;
  border-radius: 5px;
  background: #fff;
`;

const SearchInput = styled.input`
  flex: 1;
  padding: 0;
  background: none;

  &::placeholder {
    color: #8a8d91;
    opacity: 1;
  }
`;

const DateButton = styled.button`
  display: flex;
  align-items: center;
  justify-content: flex-end;
  gap: 8px;
  width: 222px;
  padding: 0 8px;
  border-radius: 4px;
  background: #e6e7e8;
  white-space: nowrap;
`;

const Levels = styled.div`
  display: flex;
  align-items: flex-end;
  gap: 5px;
  height: 33px;
  padding: 0 5px;
`;

const Level = styled.button`
  display: flex;
  flex: 1;
  align-items: center;
  gap: 5px;
  height: ${({ $active }) => ($active ? 28 : 26)}px;
  padding: 0 8px;
  border-radius: 4px 4px 0 0;
  background: ${({ $active }) => ($active ? "#fff" : "#f7f8f9")};
  color: ${({ $active }) => ($active ? "#2a5db0" : "#2b2e32")};
  font-size: 10px;
  font-weight: 700;
`;

const Panel = styled.section`
  display: flex;
  flex: 1;
  flex-direction: column;
  min-height: 0;
  border-radius: 5px;
  background: #fff;
  overflow: hidden;
`;

/* toolbar */

const ToolbarRow = styled.div`
  display: flex;
  align-items: center;
  gap: 5px;
  height: 33px;
  padding: 0 6px 0 5px;
  border-bottom: 1px solid #dcdee1;
`;

const Split = styled.div`
  display: flex;
  gap: 2px;
`;

const TONES = { off: "#e4e5e6", mid: "#ebeced", normal: "#f3f4f5" };

const ToolButton = styled.button`
  display: flex;
  align-items: center;
  justify-content: center;
  gap: 6px;
  width: ${({ $w }) => $w}px;
  height: 22px;
  padding: 0;
  border-radius: 3px;
  background: ${({ $tone = "normal" }) => TONES[$tone]};
  color: ${({ $tone }) => ($tone === "off" ? "#8a8d91" : "#333639")};
  white-space: nowrap;
`;

const CreateButton = styled(ToolButton)`
  width: 52px;
  background: #58b80c;
  color: #fff;
  font-weight: 700;
`;

const SetupLabel = styled.label`
  display: flex;
  align-items: center;
  gap: 4px;
  margin-left: auto;
`;

const Switch = styled.input`
  appearance: none;
  display: block;
  width: 22px;
  height: 12px;
  margin: 0;
  border-radius: 6px;
  background: ${({ $ghost }) => ($ghost ? "#fff" : "#dcdddf")};
  box-shadow: ${({ $ghost }) => ($ghost ? "0 0 0 1px #e6e7e9" : "none")};

  &::before {
    content: "";
    display: block;
    width: 12px;
    height: 12px;
    border-radius: 50%;
    background: ${({ $ghost }) => ($ghost ? "#333639" : "#5c6069")};
  }

  &:checked {
    background: #cfe2f8;
  }

  &:checked::before {
    margin-left: 10px;
    background: #1f6ce8;
  }
`;

/* table */

const TableArea = styled.div`
  position: relative;
  flex: 1;
  min-height: 0;
  overflow: hidden;
`;

const Table = styled.table`
  width: 100%;
  height: 455px;
  table-layout: fixed;
  border-collapse: separate;
  border-spacing: 0;

  tbody tr {
    background: #fff;
  }

  tbody tr:nth-child(even) {
    background: #f5f6f8;
  }
`;

const Col = styled.col`
  width: ${({ $w }) => $w}px;
`;

const cellEdge = css`
  border-right: ${({ $edge }) => ($edge ? "2px solid #dcdde0" : "1px solid #e6e7ea")};

  &:last-child {
    border-right: none;
  }
`;

const Th = styled.th`
  height: 40px;
  padding: 0 6px;
  ${cellEdge}
  border-bottom: 1px solid #dcdee1;
  text-align: left;
  font-size: 9px;
  font-weight: 700;
  line-height: 10px;

  > input,
  > button {
    margin: ${({ $center }) => ($center ? "0 auto" : "0")};
  }
`;

const HeadInner = styled.div`
  display: flex;
  align-items: center;
  justify-content: space-between;
  gap: 4px;
`;

const HeadLabel = styled.span`
  flex: 1;
  min-width: 0;
`;

const Clipped = styled.div`
  width: 32px;
  overflow: hidden;
`;

/* the column is scrolled half under the frozen name column */
const CutLabel = styled.span`
  display: flex;
  justify-content: flex-end;
  width: 12px;
  margin-left: -6px;
  overflow: hidden;

  span {
    flex: none;
    width: 44px;
    margin-right: -3px;
  }
`;

const Td = styled.td`
  padding: ${({ $mid, $edge }) => ($mid ? "0" : $edge ? "3px 2px 0 7px" : "3px 7px 0")};
  ${cellEdge}
  vertical-align: ${({ $mid }) => ($mid ? "middle" : "top")};
  overflow: hidden;

  > input {
    margin: 0 auto;
  }
`;

const Tick = styled.input`
  appearance: none;
  display: block;
  width: 15px;
  height: 15px;
  border: 1px solid #dfe1e4;
  border-radius: 3px;
  background: #fff;
`;

const CampaignLink = styled.a`
  display: block;
  overflow: hidden;
  color: #2f6db5;
  line-height: 11px;
  text-decoration: none;
  text-overflow: ellipsis;
  white-space: nowrap;
`;

const Value = styled.div`
  display: flex;
  justify-content: flex-end;
  gap: 3px;
  line-height: 12px;
  font-weight: ${({ $bold }) => ($bold ? 700 : 400)};
  color: ${({ $bold }) => ($bold ? "#1c1e21" : "#3a3d41")};
  white-space: nowrap;
`;

const Estimated = styled.span`
  text-decoration: underline dotted;
  text-underline-offset: 1px;
`;

const Footnote = styled.sup`
  font-size: 6px;
  line-height: 10px;
  vertical-align: baseline;
  color: #54575b;
`;

const Note = styled.div`
  display: flex;
  justify-content: flex-end;
  margin-top: 1px;
  color: #97999d;
  font-size: 8px;
  line-height: 11px;
  white-space: nowrap;
`;

const FootTd = styled.td`
  position: sticky;
  bottom: 0;
  height: 40px;
  padding: 4px 3px 0;
  ${cellEdge}
  border-top: 1px solid #d5d7da;
  background: #fff;
  vertical-align: top;
  overflow: hidden;
`;

const Summary = styled.div`
  display: flex;
  gap: 9px;
`;

const SummaryTitle = styled.div`
  display: flex;
  align-items: center;
  gap: 3px;
  font-weight: 700;
  line-height: 12px;
`;

const SummaryNote = styled.div`
  margin-top: 1px;
  color: #97999d;
  font-size: 8px;
  line-height: 11px;
`;

const ScrollThumb = styled.div`
  position: absolute;
  top: 43px;
  right: 3px;
  width: 4px;
  height: 53px;
  border-radius: 2px;
  background: #b9bbbe;
`;

const HorizontalScroll = styled.div`
  display: flex;
  align-items: center;
  justify-content: flex-end;
  height: 10px;
  padding: 0 3px;
`;

const HorizontalThumb = styled.div`
  width: 63.5%;
  height: 4px;
  border-radius: 2px;
  background: #bcbec0;
`;

/* right rail */

const Rail = styled.aside`
  display: flex;
  flex-direction: column;
  align-items: center;
  gap: 5px;
  width: 27px;
  padding-top: 6px;
  background: #606163;
`;

const RailButton = styled(PlainButton)`
  width: 22px;
  height: 22px;
  border-radius: 3px;
  background: ${({ $active }) => ($active ? "#7b7c7e" : "none")};
  color: #c9cacc;
`;

/* windows taskbar */

const TaskbarRow = styled.footer`
  display: flex;
  align-items: stretch;
  height: 25px;
  background: linear-gradient(90deg, #cfe4ee, #cfdfec 50%, #d9dfee);
  font-family: "Open Sans", "Noto Sans", sans-serif;
`;

const StartButton = styled(PlainButton)`
  width: 31px;
  color: #111;
`;

const TaskSearch = styled.label`
  display: flex;
  align-items: center;
  gap: 6px;
  width: 213px;
  padding: 0 7px;
  background: #fff;
`;

const TaskInput = styled.input`
  flex: 1;
  min-width: 0;
  padding: 0;
  background: none;

  &::placeholder {
    color: #3c4043;
    opacity: 1;
  }
`;

const TaskList = styled.div`
  display: grid;
  grid-template-columns: repeat(11, 1fr);
  width: 340px;
`;

const Task = styled(PlainButton)`
  margin: 0 ${({ $active }) => ($active ? 0 : 3)}px;
  border-top: 2px solid transparent;
  border-bottom: 2px solid ${({ $open }) => ($open ? "#1878c8" : "transparent")};
  background: ${({ $active }) => ($active ? "#eff5f9" : "none")};
`;

const Tray = styled.div`
  display: flex;
  align-items: center;
  gap: 4px;
  margin-left: auto;
  padding-right: 9px;
  font-size: 8px;
`;

const Weather = styled.span`
  display: flex;
  gap: 6px;
  margin-right: 5px;
`;

const Clockface = styled.span`
  display: flex;
  flex-direction: column;
  align-items: center;
  width: 42px;
  margin-right: 4px;
  font-size: 7px;
  line-height: 11px;
`;
